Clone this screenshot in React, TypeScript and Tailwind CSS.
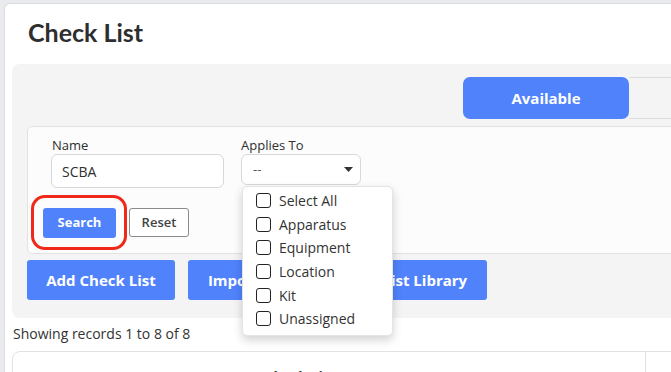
import { useState } from "react";

const options = ["Select All", "Apparatus", "Equipment", "Location", "Kit", "Unassigned"];

export default function App() {
  const [name, setName] = useState("SCBA");
  const [checked, setChecked] = useState<string[]>([]);

  const toggle = (opt: string) => {
    setChecked(checked.includes(opt) ? checked.filter((o) => o !== opt) : [...checked, opt]);
  };

  return (
    <div
      className="w-[671px] h-[372px] overflow-hidden bg-[#e9ebee] pt-[3px] pl-[4px] text-[#2f2f2f]"
      style={{ fontFamily: '"Open Sans", "Noto Sans", sans-serif' }}
    >
      <div className="h-[400px] w-[700px] bg-white border-l border-t border-[#d9dbde] rounded-tl-[6px] pl-[7px]">
        {/* Title */}
        <h1
          className="pl-[16px] pt-[13px] h-[60px] text-[25px] leading-[30px] font-bold text-[#2e2e2e]"
          style={{ fontFamily: '"Lato", "Noto Sans", sans-serif' }}
        >
          Check List
        </h1>

        {/* Gray panel */}
        <div className="bg-[#f4f4f4] rounded-[8px] pl-[15px] pt-[13px] h-[254px]">
          {/* Tabs */}
          <div className="flex h-[42px] pl-[436px]">
            <button className="w-[166px] h-[42px] bg-[#5082fc] text-white font-bold text-[15px] rounded-[7px]">
              Available
            </button>
            <div className="flex-1 border-y border-[#dcdcdc]" />
          </div>

          {/* Filter panel */}
          <div className="mt-[7px] bg-[#fcfcfc] border border-[#e2e2e2] rounded-[5px] h-[128px] pl-[23px] pt-[10px]">
            <div className="flex gap-[17px]">
              <div className="flex flex-col">
                <label className="text-[13px] leading-[17px] pl-[1px]">Name</label>
                <input
                  value={name}
                  onChange={(e) => setName(e.target.value)}
                  className="w-[173px] h-[34px] border border-[#d8d8d8] rounded-[6px] bg-white px-[10px] text-[14px] outline-none"
                />
              </div>
              <div className="flex flex-col">
                <label className="text-[13px] leading-[17px]">Applies To</label>
                <div className="relative">
                  <div className="w-[120px] h-[31px] border border-[#d8d8d8] rounded-[6px] bg-white flex items-center justify-between pl-[11px] pr-[7px] text-[13px] text-[#555]">
                    <span>--</span>
                    <svg width="9" height="5" viewBox="0 0 9 5">
                      <path d="M0 0h9L4.5 5z" fill="#333" />
                    </svg>
                  </div>

                  {/* Dropdown */}
                  <div className="absolute left-[1px] top-[32px] w-[151px] bg-white rounded-[5px] border border-[#e4e4e4] shadow-[0_4px_10px_rgba(0,0,0,0.18)] pt-[2px] pb-[4px] z-10">
                    {options.map((opt) => (
                      <label
                        key={opt}
                        onClick={() => toggle(opt)}
                        className="flex items-center h-[23.6px] pl-[13px] gap-[8px] text-[14px] text-[#333] cursor-pointer"
                      >
                        <span className="w-[15px] h-[15px] border-[1.5px] border-[#222] rounded-[3px] bg-white flex items-center justify-center text-[10px]">
                          {checked.includes(opt) ? "✓" : ""}
                        </span>
                        {opt}
                      </label>
                    ))}
                  </div>
                </div>
              </div>
            </div>

            <div className="flex items-start gap-[13px] mt-[20px] -ml-[8px]">
              <div className="relative">
                <span className="absolute -left-[12px] -right-[11px] -top-[13px] -bottom-[12px] border-[3px] border-[#f0281a] rounded-[14px]" />
                <button className="relative w-[73px] h-[30px] bg-[#5082fc] text-white text-[13px] font-bold rounded-[3px]">
                  Search
                </button>
              </div>
              <button className="w-[60px] h-[29px] bg-white border border-[#8a8a8a] text-[#444] text-[13px] font-semibold rounded-[3px]">
                Reset
              </button>
            </div>
          </div>

          {/* Action buttons */}
          <div className="flex gap-[13px] mt-[6px]">
            <button className="w-[148px] h-[40px] bg-[#5082fc] text-white text-[15px] font-bold rounded-[3px]">
              Add Check List
            </button>
            <button className="w-[299px] h-[40px] bg-[#5082fc] text-white text-[15px] font-bold rounded-[3px] whitespace-nowrap">
              Import from the Check List Library
            </button>
          </div>
        </div>

        {/* Records */}
        <p className="pl-[1px] pt-[6px] text-[14px] leading-[20px] text-[#333]">Showing records 1 to 8 of 8</p>

        <div className="mt-[7px] w-[700px] h-[60px] border border-[#e2e2e2] rounded-[8px] flex">
          <div className="w-[633px] border-r border-[#e2e2e2] flex justify-center pr-[12px] pt-[14px] text-[14px] font-bold">
            Check List Name
          </div>
        </div>
      </div>
    </div>
  );
}
